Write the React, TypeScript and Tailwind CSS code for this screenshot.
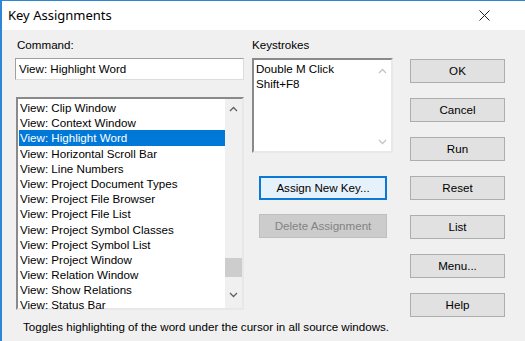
const commands = [
  "View: Clip Window",
  "View: Context Window",
  "View: Highlight Word",
  "View: Horizontal Scroll Bar",
  "View: Line Numbers",
  "View: Project Document Types",
  "View: Project File Browser",
  "View: Project File List",
  "View: Project Symbol Classes",
  "View: Project Symbol List",
  "View: Project Window",
  "View: Relation Window",
  "View: Show Relations",
  "View: Status Bar",
];

const sideButtons = ["OK", "Cancel", "Run", "Reset", "List", "Menu...", "Help"];

function Chevron({ up, light }: { up?: boolean; light?: boolean }) {
  return (
    <svg width="9" height="6" viewBox="0 0 9 6" className="block">
      <polyline
        points={up ? "1,5 4.5,1.5 8,5" : "1,1 4.5,4.5 8,1"}
        fill="none"
        stroke={light ? "#c4c4c4" : "#606060"}
        strokeWidth="1.3"
      />
    </svg>
  );
}

function WinButton({ label, focused, disabled }: { label: string; focused?: boolean; disabled?: boolean }) {
  const base = "flex items-center justify-center text-[11.6px] leading-none";
  if (focused) {
    return (
      <div className={`${base} h-[24px] w-[128px] border-2 border-[#0a78d4] bg-[#e5f1fb] text-black`}>{label}</div>
    );
  }
  if (disabled) {
    return (
      <div className={`${base} h-[24px] w-[128px] border border-[#bfbfbf] bg-[#cccccc] text-[#838383]`}>{label}</div>
    );
  }
  return (
    <div className={`${base} h-[24px] w-[95px] border border-[#adadad] bg-[#e1e1e1] text-black`}>{label}</div>
  );
}

export default function App() {
  return (
    <div
      className="w-[525px] h-[341px] overflow-hidden bg-[#f0f0f0] border-l-2 border-t border-[#2f86d6] text-black"
      style={{ fontFamily: '"Liberation Sans", Arial, sans-serif' }}
    >
      <div className="h-[29px] bg-white flex items-center justify-between pl-[6px] pr-[35px]">
        <span className="text-[13px] text-black" style={{ fontFamily: '"Noto Sans", "Open Sans", sans-serif' }}>
          Key Assignments
        </span>
        <svg width="11" height="11" viewBox="0 0 11 11">
          <path d="M0.5 0.5 L10.5 10.5 M10.5 0.5 L0.5 10.5" stroke="#222" strokeWidth="1" />
        </svg>
      </div>

      <div className="flex pl-[13px] pt-[8px] text-[11.6px]">
        {/* command column */}
        <div className="w-[229px] flex flex-col">
          <div className="h-[14px] leading-[14px] pl-[2px]">Command:</div>
          <div className="mt-[6px] h-[22px] bg-white border border-t-[#a0a0a0] border-l-[#a0a0a0] border-r-[#dcdcdc] border-b-[#dcdcdc] flex items-center pl-[3px]">
            View: Highlight Word
          </div>
          <div className="mt-[17px] h-[213px] bg-white border-2 border-t-[#8a8a8a] border-l-[#8a8a8a] border-r-[#e8e8e8] border-b-[#e8e8e8] flex ml-[1px]">
            <div className="flex-1 flex flex-col pt-[1px] pl-[1px]">
              {commands.map((c) => (
                <div
                  key={c}
                  className={`h-[15.2px] leading-[15.2px] pl-[1px] whitespace-nowrap ${
                    c === "View: Highlight Word" ? "bg-[#0078d7] text-white" : ""
                  }`}
                >
                  {c}
                </div>
              ))}
            </div>
            <div className="w-[17px] bg-[#f0f0f0] flex flex-col items-center">
              <div className="mt-[7px]">
                <Chevron up />
              </div>
              <div className="mt-[146px] w-[17px] h-[19px] bg-[#cdcdcd]" />
              <div className="mt-[15px]">
                <Chevron />
              </div>
            </div>
          </div>
          <div className="mt-[10px] pl-[8px] h-[14px] leading-[14px] whitespace-nowrap">
            Toggles highlighting of the word under the cursor in all source windows.
          </div>
        </div>

        {/* keystrokes column */}
        <div className="ml-[8px] w-[141px] flex flex-col">
          <div className="h-[14px] leading-[14px]">Keystrokes</div>
          <div className="mt-[6px] h-[95px] bg-white border-2 border-t-[#8a8a8a] border-l-[#8a8a8a] border-r-[#e8e8e8] border-b-[#e8e8e8] flex">
            <div className="flex-1 pl-[2px] pt-[1px]">
              <div className="h-[15px] leading-[15px]">Double M Click</div>
              <div className="h-[15px] leading-[15px]">Shift+F8</div>
            </div>
            <div className="w-[17px] flex flex-col items-center justify-between pt-[8px] pb-[6px]">
              <Chevron up light />
              <Chevron light />
            </div>
          </div>
          <div className="mt-[23px] ml-[7px]">
            <WinButton label="Assign New Key..." focused />
          </div>
          <div className="mt-[14px] ml-[7px]">
            <WinButton label="Delete Assignment" disabled />
          </div>
        </div>

        {/* buttons column */}
        <div className="ml-[17px] pt-[21px] flex flex-col gap-[15px]">
          {sideButtons.map((b) => (
            <WinButton key={b} label={b} />
          ))}
        </div>
      </div>
    </div>
  );
}
